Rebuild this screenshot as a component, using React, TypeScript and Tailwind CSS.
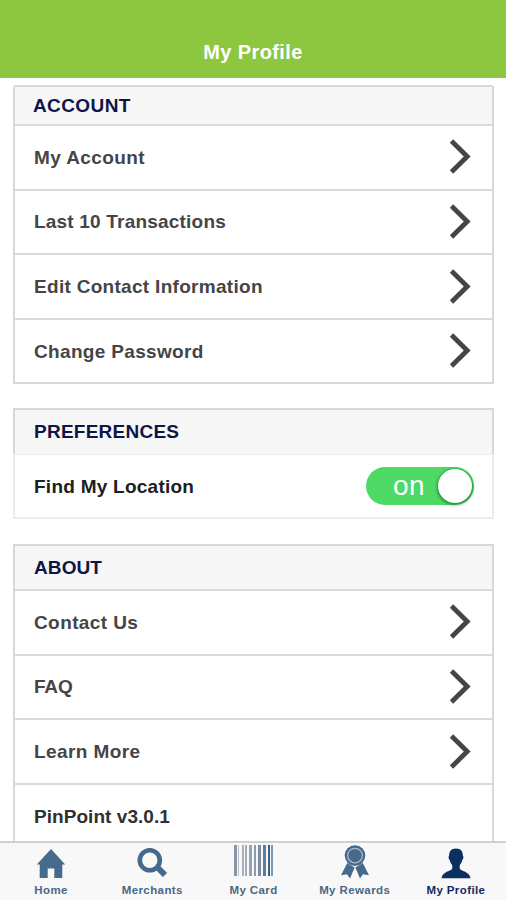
import React from "react";
import clsx from "clsx";

const ACCOUNT_ITEMS = [
  { label: "My Account", spacing: "tracking-[0.4px]" },
  { label: "Last 10 Transactions", spacing: "tracking-[0.2px]" },
  { label: "Edit Contact Information", spacing: "tracking-[0.3px]" },
  { label: "Change Password", spacing: "tracking-[0.33px]" },
];

const ABOUT_ITEMS = [
  { label: "Contact Us", spacing: "tracking-[0.4px]" },
  { label: "FAQ", spacing: "tracking-[-0.2px]" },
  { label: "Learn More", spacing: "tracking-[0.4px]" },
];

const BARS = [
  { x: 0, w: 3, c: "#8795a4" },
  { x: 4, w: 1, c: "#b9c1ca" },
  { x: 8, w: 2, c: "#a9b2bc" },
  { x: 11, w: 2, c: "#a3adb9" },
  { x: 15, w: 3, c: "#98a4b2" },
  { x: 20, w: 2, c: "#8c9aaa" },
  { x: 24, w: 3, c: "#7a8da2" },
  { x: 29, w: 3, c: "#5d7c98" },
  { x: 34, w: 2, c: "#2f648a" },
  { x: 37, w: 2, c: "#8397ab" },
];

function Chevron() {
  return (
    <svg width="22" height="36" viewBox="0 0 22 36" fill="none" className="shrink-0">
      <path d="M2.5 2L18.2 17.5L2.5 33" stroke="#454547" strokeWidth="4.8" />
    </svg>
  );
}

function HomeIcon() {
  return (
    <svg width="30" height="30" viewBox="0 0 30 30" fill="currentColor">
      <path d="M15 0L29.2 15.6H26.3V29H18.3V19.5H11.7V29H3.7V15.6H0.8Z" />
    </svg>
  );
}

function SearchIcon() {
  return (
    <svg width="30" height="30" viewBox="0 0 30 30" fill="none" stroke="currentColor">
      <circle cx="12.8" cy="12.2" r="10" strokeWidth="4.6" />
      <path d="M19.5 18.5L28 27" strokeWidth="6" />
    </svg>
  );
}

function BarcodeIcon() {
  return (
    <svg width="40" height="31" viewBox="0 0 40 31" className="ml-0.5">
      {BARS.map((bar) => (
        <rect key={bar.x} x={bar.x} y="0" width={bar.w} height="31" fill={bar.c} />
      ))}
    </svg>
  );
}

function RibbonIcon() {
  return (
    <svg width="30" height="34" viewBox="0 0 30 34" fill="currentColor" className="ml-px">
      <path d="M7.2 18L1 30.3L7 29.3L10 33.5L14.6 22.5Z" />
      <path d="M22.8 18L29 30.3L23 29.3L20 33.5L15.4 22.5Z" />
      <circle cx="15" cy="10.6" r="10.3" />
      <circle cx="15" cy="10.6" r="7.3" fill="none" stroke="#a9bccb" strokeWidth="1.2" />
    </svg>
  );
}

function ProfileIcon() {
  return (
    <svg width="30" height="31" viewBox="0 0 30 31" fill="currentColor" className="ml-0.5">
      <path d="M15 0.5C19.7 0.5 22 3.3 21.8 7.5C23 8.5 22.2 11.8 21 12.4C20.6 14.6 19.8 16 18.7 17.2V20.4C19.6 23 28.8 23.4 29.5 30.3H0.5C1.2 23.4 10.4 23 11.3 20.4V17.2C10.2 16 9.4 14.6 9 12.4C7.8 11.8 7 8.5 8.2 7.5C8 3.3 10.3 0.5 15 0.5Z" />
    </svg>
  );
}

const TABS = [
  { label: "Home", icon: HomeIcon, gap: "pt-[6px]" },
  { label: "Merchants", icon: SearchIcon, gap: "pt-[5px]" },
  { label: "My Card", icon: BarcodeIcon, gap: "pt-[2px]" },
  { label: "My Rewards", icon: RibbonIcon, gap: "pt-[2px]" },
  { label: "My Profile", icon: ProfileIcon, gap: "pt-[5px]", active: true },
];

function SectionTitle({ children, className }: { children: React.ReactNode; className?: string }) {
  return (
    <h2
      className={clsx(
        "flex items-center bg-[#f7f7f7] text-[19px] font-bold text-[#0e1648]",
        className
      )}
    >
      {children}
    </h2>
  );
}

function Row({ label, spacing }: { label: string; spacing: string }) {
  return (
    <div className="flex h-[64.7px] items-center justify-between border-t-2 border-[#dadada] pl-[19px] pr-[21px]">
      <span className={clsx("pt-px text-[19px] font-bold text-[#454547]", spacing)}>{label}</span>
      <Chevron />
    </div>
  );
}

export default function App() {
  return (
    <div className="flex h-[900px] w-[506px] flex-col overflow-hidden bg-white font-['Liberation_Sans',sans-serif]">
      <header className="flex h-[78px] shrink-0 items-end justify-center bg-[#8dc63f] pb-[11px]">
        <h1 className="text-[20px] leading-[30px] font-bold tracking-[0.4px] text-white">My Profile</h1>
      </header>

      <main className="flex min-h-0 flex-1 flex-col overflow-hidden px-3 pt-[7px]">
        {/* Account */}
        <section className="ml-px h-[299px] shrink-0 rounded-t-[3px] border-2 border-[#d8d8d8]">
          <SectionTitle className="h-[37px] pt-px pl-[18px] tracking-[0.4px]">ACCOUNT</SectionTitle>
          {ACCOUNT_ITEMS.map((item) => (
            <Row key={item.label} {...item} />
          ))}
        </section>

        {/* Preferences */}
        <section className="mt-6 ml-px shrink-0">
          <SectionTitle className="h-[46px] border-2 border-b-0 border-[#d8d8d8] pt-px pl-[19px] tracking-[0.25px]">
            PREFERENCES
          </SectionTitle>
          <div className="flex h-[65px] items-center justify-between border-2 border-t border-[#ececec] pl-[19px] pr-[18px]">
            <span className="pt-[3px] text-[19px] font-bold tracking-[0.25px] text-[#202022]">Find My Location</span>
            <div className="flex h-[38px] w-[108px] items-center justify-between rounded-full bg-[#4cd964] pr-[2px] pl-[27px]">
              <span className="text-[28px] leading-none tracking-[0.5px] text-white">on</span>
              <span className="size-[34px] rounded-full bg-white shadow-[0_1px_3px_1px_rgba(0,80,20,0.55)]" />
            </div>
          </div>
        </section>

        {/* About */}
        <section className="mt-[25px] ml-px shrink-0 border-2 border-[#d8d8d8]">
          <SectionTitle className="h-[43px] pt-px pl-[19px] tracking-[0.1px]">ABOUT</SectionTitle>
          {ABOUT_ITEMS.map((item) => (
            <Row key={item.label} {...item} />
          ))}
          <div className="flex h-[65px] items-center border-t-2 border-[#dadada] pl-[19px]">
            <span className="pt-[2px] text-[19px] font-bold tracking-[0.05px] text-[#303032]">PinPoint v3.0.1</span>
          </div>
        </section>
      </main>

      <nav className="grid h-[59px] shrink-0 grid-cols-5 border-t-2 border-[#d0d0d0] bg-[#f8f8f8]">
        {TABS.map((tab) => (
          <div
            key={tab.label}
            className={clsx(
              "flex flex-col items-center justify-between pb-[3px]",
              tab.gap,
              tab.active ? "text-[#0b2f5e]" : "text-[#456a8c]"
            )}
          >
            <tab.icon />
            <span
              className={clsx(
                "ml-px text-[11.5px] leading-[14px] font-bold tracking-[0.4px] whitespace-nowrap",
                tab.active ? "text-[#15295c]" : "text-[#4b6785]"
              )}
            >
              {tab.label}
            </span>
          </div>
        ))}
      </nav>
    </div>
  );
}
